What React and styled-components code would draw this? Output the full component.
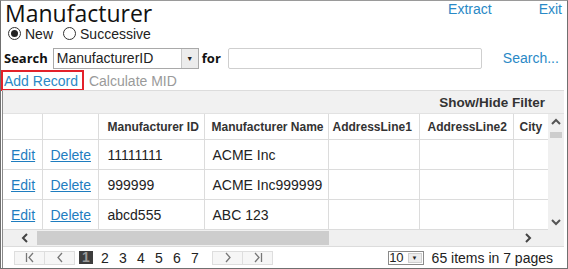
import React from "react";
import styled, { createGlobalStyle } from "styled-components";

const Global = createGlobalStyle`
  html, body { margin: 0; padding: 0; background: #fff; }
  body { font-family: "Liberation Sans", Arial, sans-serif; }
`;

const Frame = styled.div`
  width: 568px;
  height: 269px;
  box-sizing: border-box;
  border: 1px solid #707070;
  border-top-color: #9a9a9a;
  display: flex;
  flex-direction: column;
  overflow: hidden;
  color: #222;
`;

const TopBar = styled.div`
  height: 24px;
  display: flex;
  align-items: flex-start;
  padding: 0 5px 0 4px;
`;

const Title = styled.h1`
  margin: 0;
  font-family: "Open Sans", sans-serif;
  font-weight: 400;
  font-size: 23px;
  line-height: 24px;
  color: #111;
  flex: 1;
`;

const TopLink = styled.a`
  color: #2a89c6;
  font-size: 14px;
  line-height: 16px;
  text-decoration: none;
  margin-left: ${(p) => p.gap || 0}px;
`;

const RadioRow = styled.div`
  height: 17px;
  display: flex;
  align-items: center;
  padding-left: 7px;
  gap: 10px;
  font-size: 14px;
`;

const RadioItem = styled.label`
  display: flex;
  align-items: center;
  gap: 4px;
`;

const RadioDot = styled.span`
  width: 11px;
  height: 11px;
  border: 1px solid #333;
  border-radius: 50%;
  display: inline-flex;
  align-items: center;
  justify-content: center;
  &::after {
    content: "";
    width: 7px;
    height: 7px;
    border-radius: 50%;
    background: ${(p) => (p.checked ? "#222" : "transparent")};
  }
`;

const SearchRow = styled.div`
  height: 24px;
  margin-top: 4px;
  display: flex;
  align-items: center;
  padding-left: 3px;
`;

const Label = styled.span`
  font-family: "Open Sans", sans-serif;
  font-weight: 700;
  font-size: 13px;
  color: #111;
  margin-right: ${(p) => p.mr || 0}px;
`;

const Select = styled.div`
  width: 146px;
  height: 21px;
  box-sizing: border-box;
  border: 1px solid #a9a9a9;
  display: flex;
  align-items: stretch;
  font-size: 14px;
  margin-right: 3px;
`;

const SelectText = styled.span`
  flex: 1;
  padding-left: 3px;
  line-height: 19px;
`;

const SelectButton = styled.span`
  width: 16px;
  border-left: 1px solid #c8c8c8;
  background: #ececec;
  display: flex;
  align-items: center;
  justify-content: center;
  font-size: 7px;
  color: #222;
`;

const TextInput = styled.div`
  width: 254px;
  height: 21px;
  box-sizing: border-box;
  border: 1px solid #cfcfcf;
  border-radius: 2px;
  margin-left: 7px;
`;

const SearchLink = styled(TopLink)`
  margin-left: 21px;
`;

const ActionRow = styled.div`
  height: 21px;
  display: flex;
  align-items: center;
  font-size: 14px;
`;

const Highlight = styled.div`
  height: 21px;
  box-sizing: border-box;
  border: 2px solid #e3212a;
  padding: 0 4px 0 1px;
  display: flex;
  align-items: center;
`;

const AddLink = styled.a`
  color: #2a89c6;
  text-decoration: none;
`;

const Disabled = styled.span`
  color: #9a9a9a;
  margin-left: 5px;
`;

const Grid = styled.div`
  flex: 1;
  margin: -1px 3px 0 1px;
  border-top: 1px solid #dcdcdc;
  border-left: 1px solid #8a8a8a;
  display: flex;
  flex-direction: column;
  min-height: 0;
`;

const FilterBar = styled.div`
  height: 22px;
  background: #f1f1f1;
  display: flex;
  align-items: center;
  justify-content: flex-end;
  padding-right: 19px;
`;

const FilterText = styled.span`
  font-family: "Liberation Sans", Arial, sans-serif;
  font-weight: 700;
  font-size: 13.5px;
  color: #333;
`;

const Body = styled.div`
  height: 116px;
  display: flex;
  border-top: 1px solid #e2e2e2;
`;

const TableClip = styled.div`
  flex: 1;
  overflow: hidden;
`;

const Table = styled.table`
  border-collapse: collapse;
  table-layout: fixed;
  width: 570px;
`;

const Th = styled.th`
  height: 25px;
  padding: 0 0 0 ${(p) => p.pl || 8}px;
  text-align: left;
  font-family: "Liberation Sans", Arial, sans-serif;
  font-weight: 700;
  font-size: 12px;
  color: #333;
  white-space: nowrap;
  overflow: hidden;
  border-right: 1px solid #dcdcdc;
  border-bottom: 1px solid #dcdcdc;
`;

const Td = styled.td`
  height: 29px;
  padding: 0 0 0 ${(p) => p.pl || 8}px;
  font-family: "Liberation Sans", Arial, sans-serif;
  font-size: 14px;
  white-space: nowrap;
  overflow: hidden;
  border-right: 1px solid #dcdcdc;
  border-bottom: 1px solid #dcdcdc;
  color: #222;
`;

const RowLink = styled.a`
  color: #1f7dbf;
  text-decoration: underline;
`;

const VScroll = styled.div`
  width: 16px;
  background: #f0f0f0;
  display: flex;
  flex-direction: column;
  align-items: center;
`;

const VThumb = styled.div`
  width: 12px;
  height: 6px;
  background: #cdcdcd;
  margin-top: 2px;
`;

const Spacer = styled.div`
  flex: 1;
`;

const HScroll = styled.div`
  height: 16px;
  background: #f0f0f0;
  display: flex;
  align-items: center;
  border-bottom: 1px solid #dcdcdc;
`;

const HThumb = styled.div`
  width: 292px;
  height: 14px;
  background: #cdcdcd;
  margin-left: 8px;
`;

const ArrowBox = styled.span`
  width: ${(p) => p.w || 16}px;
  height: 16px;
  display: flex;
  align-items: center;
  justify-content: ${(p) => p.justify || "center"};
  flex: none;
`;

const Pager = styled.div`
  flex: 1;
  display: flex;
  align-items: center;
  padding-left: 11px;
  font-size: 14px;
`;

const PageButton = styled.span`
  width: 29px;
  height: 12px;
  border: 1px solid #dedede;
  background: #f6f6f6;
  margin-right: -1px;
  display: flex;
  align-items: center;
  justify-content: center;
`;

const PageNum = styled.span`
  width: ${(p) => (p.current ? 14 : 18)}px;
  height: ${(p) => (p.current ? 13 : 16)}px;
  line-height: ${(p) => (p.current ? 13 : 16)}px;
  text-align: ${(p) => (p.current ? "center" : "left")};
  background: ${(p) => (p.current ? "#3d3d3d" : "transparent")};
  color: ${(p) => (p.current ? "#9a9a9a" : "#222")};
  font-weight: ${(p) => (p.current ? 700 : 400)};
  margin-right: ${(p) => (p.current ? 8 : 0)}px;
`;

const PageNums = styled.div`
  display: flex;
  align-items: center;
  margin-left: 5px;
  margin-right: 3px;
`;

const SizeSelect = styled.span`
  margin-left: auto;
  display: flex;
  height: 12px;
  border: 1px solid #8a8a8a;
  font-size: 13px;
  line-height: 12px;
  margin-right: 8px;
`;

const SizeButton = styled.span`
  width: 12px;
  margin: 1px;
  margin-left: 4px;
  border: 1px solid #cfcfcf;
  background: #ececec;
  font-size: 6px;
  display: flex;
  align-items: center;
  justify-content: center;
  height: 8px;
`;

const Summary = styled.span`
  margin-right: 11px;
`;

const Chevron = ({ dir, color = "#555" }) => {
  const paths = {
    left: "M6 1 L2 5 L6 9",
    right: "M2 1 L6 5 L2 9",
    up: "M1 6 L5 2 L9 6",
    down: "M1 2 L5 6 L9 2",
  };
  const horiz = dir === "left" || dir === "right";
  return (
    <svg width={horiz ? 8 : 10} height={horiz ? 10 : 8} viewBox={horiz ? "0 0 8 10" : "0 0 10 8"}>
      <path d={paths[dir]} fill="none" stroke={color} strokeWidth="2" />
    </svg>
  );
};

const PagerIcon = ({ kind }) => (
  <svg width="12" height="11" viewBox="0 0 12 11">
    {kind === "first" && <path d="M2.5 1 V10 M9 1 L5 5.5 L9 10" fill="none" stroke="#777" strokeWidth="1.3" />}
    {kind === "prev" && <path d="M8 1 L4 5.5 L8 10" fill="none" stroke="#777" strokeWidth="1.3" />}
    {kind === "next" && <path d="M4 1 L8 5.5 L4 10" fill="none" stroke="#777" strokeWidth="1.3" />}
    {kind === "last" && <path d="M3 1 L7 5.5 L3 10 M9.5 1 V10" fill="none" stroke="#777" strokeWidth="1.3" />}
  </svg>
);

const columns = [
  { title: "", w: 39 },
  { title: "", w: 56 },
  { title: "Manufacturer ID", w: 106, pl: 9 },
  { title: "Manufacturer Name", w: 124, pl: 7 },
  { title: "AddressLine1", w: 91, pl: 4 },
  { title: "AddressLine2", w: 94, pl: 8 },
  { title: "City", w: 60, pl: 6 },
];

const rows = [
  ["11111111", "ACME Inc"],
  ["999999", "ACME Inc999999"],
  ["abcd555", "ABC 123"],
];

export default function App() {
  return (
    <>
      <Global />
      <Frame>
        <TopBar>
          <Title>Manufacturer</Title>
          <TopLink>Extract</TopLink>
          <TopLink gap={47}>Exit</TopLink>
        </TopBar>
        <RadioRow>
          <RadioItem>
            <RadioDot checked />
            New
          </RadioItem>
          <RadioItem>
            <RadioDot />
            Successive
          </RadioItem>
        </RadioRow>
        <SearchRow>
          <Label mr={5}>Search</Label>
          <Select>
            <SelectText>ManufacturerID</SelectText>
            <SelectButton>▼</SelectButton>
          </Select>
          <Label>for</Label>
          <TextInput />
          <SearchLink>Search...</SearchLink>
        </SearchRow>
        <ActionRow>
          <Highlight>
            <AddLink>Add Record</AddLink>
          </Highlight>
          <Disabled>Calculate MID</Disabled>
        </ActionRow>
        <Grid>
          <FilterBar>
            <FilterText>Show/Hide Filter</FilterText>
          </FilterBar>
          <Body>
            <TableClip>
              <Table>
                <colgroup>
                  {columns.map((c, i) => (
                    <col key={i} style={{ width: c.w }} />
                  ))}
                </colgroup>
                <thead>
                  <tr>
                    {columns.map((c, i) => (
                      <Th key={i} pl={c.pl}>
                        {c.title}
                      </Th>
                    ))}
                  </tr>
                </thead>
                <tbody>
                  {rows.map((r, i) => (
                    <tr key={i}>
                      <Td>
                        <RowLink>Edit</RowLink>
                      </Td>
                      <Td>
                        <RowLink>Delete</RowLink>
                      </Td>
                      <Td pl={9}>{r[0]}</Td>
                      <Td>{r[1]}</Td>
                      <Td />
                      <Td />
                      <Td />
                    </tr>
                  ))}
                </tbody>
              </Table>
            </TableClip>
            <VScroll>
              <ArrowBox>
                <Chevron dir="up" />
              </ArrowBox>
              <VThumb />
              <Spacer />
              <ArrowBox>
                <Chevron dir="down" />
              </ArrowBox>
            </VScroll>
          </Body>
          <HScroll>
            <ArrowBox w={26} justify="flex-end">
              <Chevron dir="left" color="#444" />
            </ArrowBox>
            <HThumb />
            <Spacer />
            <ArrowBox w={40} justify="flex-start">
              <Chevron dir="right" color="#444" />
            </ArrowBox>
          </HScroll>
          <Pager>
            <PageButton>
              <PagerIcon kind="first" />
            </PageButton>
            <PageButton>
              <PagerIcon kind="prev" />
            </PageButton>
            <PageNums>
              <PageNum current>1</PageNum>
              {[2, 3, 4, 5, 6, 7].map((n) => (
                <PageNum key={n}>{n}</PageNum>
              ))}
            </PageNums>
            <PageButton>
              <PagerIcon kind="next" />
            </PageButton>
            <PageButton>
              <PagerIcon kind="last" />
            </PageButton>
            <SizeSelect>
              10
              <SizeButton>▼</SizeButton>
            </SizeSelect>
            <Summary>65 items in 7 pages</Summary>
          </Pager>
        </Grid>
      </Frame>
    </>
  );
}
